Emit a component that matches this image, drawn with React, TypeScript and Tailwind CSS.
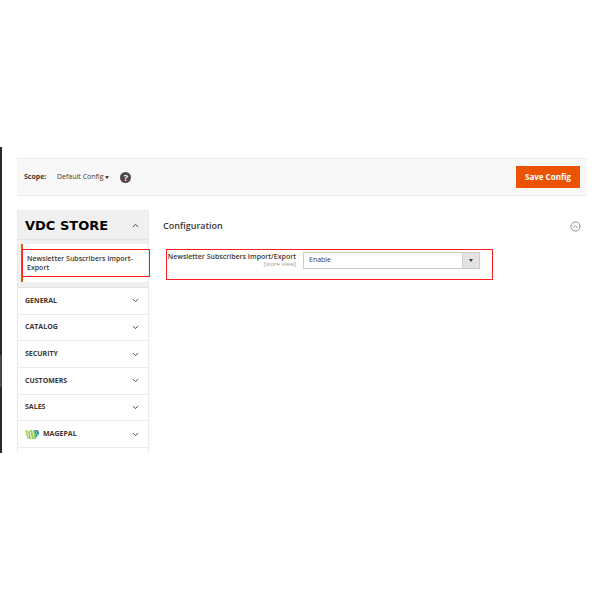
import React, { useState } from 'react';
import { ChevronDown, ChevronUp, CircleChevronUp } from 'lucide-react';

interface ConfigTab {
  id: string;
  label: string;
  icon?: React.ReactNode;
}

const MagePalIcon: React.FC = () => (
  <svg viewBox="0 0 28 18" className="w-[14px] h-[9px]" aria-hidden="true">
    <path d="M0 0 H4 L8 18 H5 Z" fill="#a8d160" />
    <path d="M6 2 H9 L12 18 H9 Z" fill="#8cc63f" />
    <path d="M10 0 H14 L18 18 H14 Z" fill="#9ccc52" />
    <path d="M16 0 H19 L23 18 H19 Z" fill="#7cc05a" />
    <path d="M19 0 H22 L25 14 H22 Z" fill="#2fa0a8" />
    <path d="M22 0 H25 Q28 2 28 6 Q28 10 25 11 Z" fill="#2b8fc4" />
  </svg>
);

const tabs: ConfigTab[] = [
  { id: 'general', label: 'GENERAL' },
  { id: 'catalog', label: 'CATALOG' },
  { id: 'security', label: 'SECURITY' },
  { id: 'customers', label: 'CUSTOMERS' },
  { id: 'sales', label: 'SALES' },
  { id: 'magepal', label: 'MAGEPAL', icon: <MagePalIcon /> }
];

const App: React.FC = () => {
  const [enabled, setEnabled] = useState('1');

  return (
    <div className="min-h-screen bg-white py-[147px] font-['Open_Sans','Noto_Sans',sans-serif] text-[#41362f]">
      <div className="flex h-[306px] overflow-hidden">

        {/* Admin menu edge */}
        <div className="w-[2px] shrink-0 bg-[#2d2926] pt-[208px]">
          <div className="h-8 bg-[#4a4542]"></div>
        </div>

        <div className="flex-1 min-w-0 pl-[15px] pr-[13px] pt-[11px]">

          {/* Page actions */}
          <header className="flex items-center justify-between h-[38px] px-[7px] bg-[#f8f8f8] border-y border-[#ebebeb]">
            <div className="flex items-center text-[7px]">
              <span className="w-[33px] font-bold">Scope:</span>
              <button type="button" className="flex items-center gap-[2px]">
                Default Config
                <svg viewBox="0 0 8 5" className="w-1 h-[3px] mt-px" aria-hidden="true">
                  <path d="M0 0 H8 L4 5 Z" fill="#1a1a1a" />
                </svg>
              </button>
              <a
                href="#scope-help"
                aria-label="What is this?"
                className="flex items-center justify-center ml-[11px] size-[11px] rounded-full bg-[#514943] text-white text-[9px] leading-none font-bold"
              >
                ?
              </a>
            </div>
            <button type="button" className="h-[22px] w-16 bg-[#eb5202] text-white text-[8px] font-bold">
              Save Config
            </button>
          </header>

          <div className="flex mt-[14px]">

            {/* Config tabs */}
            <nav className="w-[132px] shrink-0 border border-[#ebebeb]">
              <button type="button" className="flex items-center justify-between w-full h-7 pl-[7px] pr-2 bg-[#f0f0f0]">
                <span className="font-['DejaVu_Sans',sans-serif] font-bold text-[13px] leading-none text-black">VDC STORE</span>
                <ChevronUp className="size-[9px]" strokeWidth={2.5} />
              </button>
              <div className="bg-[#f0f0f0] border-y border-[#e3e3e3] pl-[3px] pt-1 pb-[5px]">
                <div className="flex items-center h-[38px] bg-white border-l-2 border-[#eb5202]">
                  <a
                    href="#newsletter"
                    className="flex items-center h-7 w-[128px] -ml-px -mr-[3px] shrink-0 pl-1 border border-[#fb1c1c] text-[7px] leading-[9px] font-semibold"
                  >
                    Newsletter Subscribers Import-Export
                  </a>
                </div>
              </div>
              <ul className="grid auto-rows-fr h-40">
                {tabs.map((tab) => (
                  <li key={tab.id} className="border-b border-[#ebebeb]">
                    <button type="button" className="flex items-center justify-between w-full h-full pl-[7px] pr-2 text-[7px] font-bold">
                      <span className="flex items-center gap-1">
                        {tab.icon}
                        {tab.label}
                      </span>
                      <ChevronDown className="size-[9px]" strokeWidth={2.5} />
                    </button>
                  </li>
                ))}
              </ul>
              <div className="h-8"></div>
            </nav>

            {/* Section fields */}
            <main className="flex-1 min-w-0 pl-[14px]">
              <div className="flex items-center justify-between h-8 pr-[6px]">
                <h1 className="text-[9px] font-semibold">Configuration</h1>
                <button type="button" aria-label="Collapse section">
                  <CircleChevronUp className="size-[11px] text-[#8a8580]" />
                </button>
              </div>
              <div className="flex w-[327px] h-[31px] mt-[7px] ml-[3px] pt-[2px] border border-[#fb1c1c]">
                <label htmlFor="newsletter-enable" className="flex flex-col w-[129px] text-right whitespace-nowrap">
                  <span className="text-[7px] leading-[9px] font-semibold">Newsletter Subscribers Import/Export</span>
                  <span className="text-[6px] leading-[7px] text-[#999999]">[store view]</span>
                </label>
                <div className="grid w-[177px] h-[17px] ml-[7px]">
                  <select
                    id="newsletter-enable"
                    value={enabled}
                    onChange={(e) => setEnabled(e.target.value)}
                    className="col-start-1 row-start-1 appearance-none rounded-none bg-white border border-[#cccccc] pl-[5px] text-[7px]"
                  >
                    <option value="1">Enable</option>
                    <option value="0">Disable</option>
                  </select>
                  <span className="col-start-1 row-start-1 justify-self-end flex items-center justify-center w-[18px] bg-[#e3e3e3] border border-[#cccccc] pointer-events-none">
                    <svg viewBox="0 0 8 6" className="w-1 h-[3px]" aria-hidden="true">
                      <path d="M0 0 H8 L4 6 Z" fill="#41362f" />
                    </svg>
                  </span>
                </div>
              </div>
            </main>

          </div>
        </div>
      </div>
    </div>
  );
};

export default App;
